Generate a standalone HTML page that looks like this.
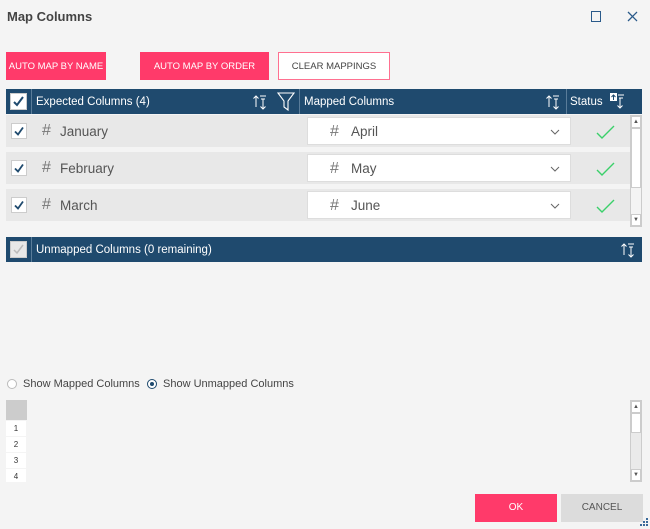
<!DOCTYPE html>
<html><head><meta charset="utf-8"><style>
*{box-sizing:border-box;margin:0;padding:0}
body{width:650px;height:529px;background:#f4f4f4;font-family:"Liberation Sans",sans-serif;position:relative;overflow:hidden;color:#333}
.a{position:absolute}
.btn{position:absolute;top:52px;height:28px;font-size:9.5px;display:flex;align-items:center;justify-content:center;color:#fff;background:#ff3a6a;white-space:nowrap}
.hdr{position:absolute;left:6px;width:636px;height:25px;background:#1f4a6e;color:#fff;font-size:11.5px}
.hdr span{position:absolute;top:7px}
.vd{position:absolute;top:0;width:1px;height:25px;background:#5a7c99}
.row{position:absolute;left:6px;width:624px;height:32px;background:#e8e8e8}
.cb{position:absolute;width:16px;height:16px;background:#fff;border:1px solid #ccc}
.hash{position:absolute;font-size:16px;color:#777;font-weight:300}
.txt{position:absolute;font-size:13.5px;color:#555}
.sb{position:absolute;width:12px;background:#eaeaea;border:1px solid #ccc}
.sbb{position:absolute;left:0;width:10px;height:12px;background:#fff;border:1px solid #ccc;font-size:6px;text-align:center;line-height:10px;color:#555}
.num{position:absolute;left:6px;width:20px;height:15px;background:#fff;font-size:8px;text-align:center;line-height:15px;color:#333}
</style></head><body>
<div class="a" style="left:7px;top:9px;font-size:13px;font-weight:bold;color:#444">Map Columns</div>
<div class="a" style="left:591px;top:11px;width:10px;height:11px;border:1.2px solid #2a5a8a"></div>
<svg class="a" style="left:627px;top:11px" width="11" height="11"><path d="M1 1L10 10M10 1L1 10" stroke="#2a5a8a" stroke-width="1.3"/></svg>

<div class="btn" style="left:6px;width:100px">AUTO MAP BY NAME</div>
<div class="btn" style="left:140px;width:129px">AUTO MAP BY ORDER</div>
<div class="btn" style="left:278px;width:112px;background:#fff;color:#444;border:1px solid #ff7090">CLEAR MAPPINGS</div>

<div class="hdr" style="top:89px">
 <div class="a" style="left:4px;top:4px;width:17px;height:17px;background:#fff;border:1px solid #ccc"><svg width="15" height="15"><path d="M3 8L6 11L12 3" stroke="#1f4a6e" stroke-width="2" fill="none"/></svg></div>
 <div class="vd" style="left:25px"></div>
 <span style="left:30px">Expected Columns (4)</span>
 <svg class="a" style="left:246px;top:4px" width="16" height="17"><path d="M4 14V3M1.5 5.5L4 3 6.5 5.5M11 6v10M8.5 13.5L11 16 13.5 13.5M8 3h6M9 6h4" stroke="#fff" stroke-width="1" fill="none"/></svg>
 <svg class="a" style="left:271px;top:3px" width="18" height="19"><path d="M1 1H17L11 9V18L7 15V9Z" stroke="#fff" stroke-width="1.1" fill="none"/></svg>
 <div class="vd" style="left:293px"></div>
 <span style="left:298px">Mapped Columns</span>
 <svg class="a" style="left:539px;top:4px" width="16" height="17"><path d="M4 14V3M1.5 5.5L4 3 6.5 5.5M11 6v10M8.5 13.5L11 16 13.5 13.5M8 3h6M9 6h4" stroke="#fff" stroke-width="1" fill="none"/></svg>
 <div class="vd" style="left:560px"></div>
 <span style="left:564px">Status</span>
 <svg class="a" style="left:603px;top:3px" width="16" height="18"><rect x="1" y="1" width="7" height="8" fill="#fff"/><path d="M4.5 8V3M2.5 5L4.5 3 6.5 5" stroke="#1f4a6e" fill="none"/><path d="M11 6v10M8.5 13.5L11 16 13.5 13.5M9 3h6M10 6h4" stroke="#fff" fill="none"/></svg>
</div>

<div class="row" style="top:115px"><div class="cb" style="left:5px;top:8px"><svg width="14" height="14"><path d="M3 7.5L6 10.5L11 3.5" stroke="#1f4a6e" stroke-width="1.8" fill="none"/></svg></div><div class="hash" style="left:36px;top:7px">#</div><div class="txt" style="left:54px;top:9px">January</div></div>
<div class="row" style="top:152px"><div class="cb" style="left:5px;top:8px"><svg width="14" height="14"><path d="M3 7.5L6 10.5L11 3.5" stroke="#1f4a6e" stroke-width="1.8" fill="none"/></svg></div><div class="hash" style="left:36px;top:7px">#</div><div class="txt" style="left:54px;top:9px">February</div></div>
<div class="row" style="top:189px"><div class="cb" style="left:5px;top:8px"><svg width="14" height="14"><path d="M3 7.5L6 10.5L11 3.5" stroke="#1f4a6e" stroke-width="1.8" fill="none"/></svg></div><div class="hash" style="left:36px;top:7px">#</div><div class="txt" style="left:54px;top:9px">March</div></div>

<div class="a" style="left:0;top:115px">
<div class="a" style="left:307px;top:2px;width:264px;height:28px;background:#fff;border:1px solid #ddd"><div class="hash" style="left:22px;top:5px">#</div><div class="txt" style="left:43px;top:6px">April</div><svg class="a" style="left:242px;top:11px" width="10" height="6"><path d="M1 1L5 5L9 1" stroke="#666" fill="none"/></svg></div>
<div class="a" style="left:307px;top:39px;width:264px;height:28px;background:#fff;border:1px solid #ddd"><div class="hash" style="left:22px;top:5px">#</div><div class="txt" style="left:43px;top:6px">May</div><svg class="a" style="left:242px;top:11px" width="10" height="6"><path d="M1 1L5 5L9 1" stroke="#666" fill="none"/></svg></div>
<div class="a" style="left:307px;top:76px;width:264px;height:28px;background:#fff;border:1px solid #ddd"><div class="hash" style="left:22px;top:5px">#</div><div class="txt" style="left:43px;top:6px">June</div><svg class="a" style="left:242px;top:11px" width="10" height="6"><path d="M1 1L5 5L9 1" stroke="#666" fill="none"/></svg></div>
<svg class="a" style="left:596px;top:9px" width="20" height="16"><path d="M1 9L6 14L18 2" stroke="#3ad06a" stroke-width="1.4" fill="none"/></svg>
<svg class="a" style="left:596px;top:46px" width="20" height="16"><path d="M1 9L6 14L18 2" stroke="#3ad06a" stroke-width="1.4" fill="none"/></svg>
<svg class="a" style="left:596px;top:83px" width="20" height="16"><path d="M1 9L6 14L18 2" stroke="#3ad06a" stroke-width="1.4" fill="none"/></svg>
</div>

<div class="sb" style="left:630px;top:115px;height:112px;background:#f4f4f4"><div class="sbb" style="top:0">▲</div><div class="a" style="left:0;top:12px;width:10px;height:60px;background:#fff;border:1px solid #ccc"></div><div class="sbb" style="bottom:0">▼</div></div>

<div class="hdr" style="top:237px">
 <div class="a" style="left:4px;top:4px;width:17px;height:17px;background:#e8e8e8;border:1px solid #ccc"><svg width="15" height="15"><path d="M3 8L6 11L12 3" stroke="#bbb" stroke-width="1.5" fill="none"/></svg></div>
 <div class="vd" style="left:25px"></div>
 <span style="left:30px">Unmapped Columns (0 remaining)</span>
 <svg class="a" style="left:614px;top:4px" width="16" height="17"><path d="M4 14V3M1.5 5.5L4 3 6.5 5.5M11 6v10M8.5 13.5L11 16 13.5 13.5M8 3h6M9 6h4" stroke="#fff" stroke-width="1" fill="none"/></svg>
</div>

<div class="a" style="left:7px;top:379px;width:10px;height:10px;border:1px solid #bbb;border-radius:50%;background:#fff"></div>
<div class="a" style="left:23px;top:378px;font-size:11px;color:#444">Show Mapped Columns</div>
<div class="a" style="left:147px;top:379px;width:10px;height:10px;border:1px solid #1f4a6e;border-radius:50%;background:#fff"><div class="a" style="left:2px;top:2px;width:4px;height:4px;border-radius:50%;background:#1f4a6e"></div></div>
<div class="a" style="left:163px;top:378px;font-size:11px;color:#444">Show Unmapped Columns</div>

<div class="a" style="left:6px;top:400px;width:21px;height:20px;background:#ccc"></div>
<div class="num" style="top:421px">1</div>
<div class="num" style="top:437px">2</div>
<div class="num" style="top:453px">3</div>
<div class="num" style="top:469px;height:13px">4</div>

<div class="sb" style="left:630px;top:400px;height:82px"><div class="sbb" style="top:0">▲</div><div class="a" style="left:0;top:12px;width:10px;height:20px;background:#fff;border:1px solid #ccc"></div><div class="sbb" style="bottom:0">▼</div></div>

<div class="a" style="left:475px;top:494px;width:82px;height:28px;background:#ff3a6a;color:#fff;font-size:10px;text-align:center;line-height:28px">OK</div>
<div class="a" style="left:561px;top:494px;width:82px;height:28px;background:#dcdcdc;color:#555;font-size:10px;text-align:center;line-height:28px">CANCEL</div>
<svg class="a" style="left:640px;top:518px" width="9" height="9"><g fill="#3a6a9a"><rect x="6" y="0" width="2" height="2"/><rect x="3" y="3" width="2" height="2"/><rect x="6" y="3" width="2" height="2"/><rect x="0" y="6" width="2" height="2"/><rect x="3" y="6" width="2" height="2"/><rect x="6" y="6" width="2" height="2"/></g></svg>
</body></html>
